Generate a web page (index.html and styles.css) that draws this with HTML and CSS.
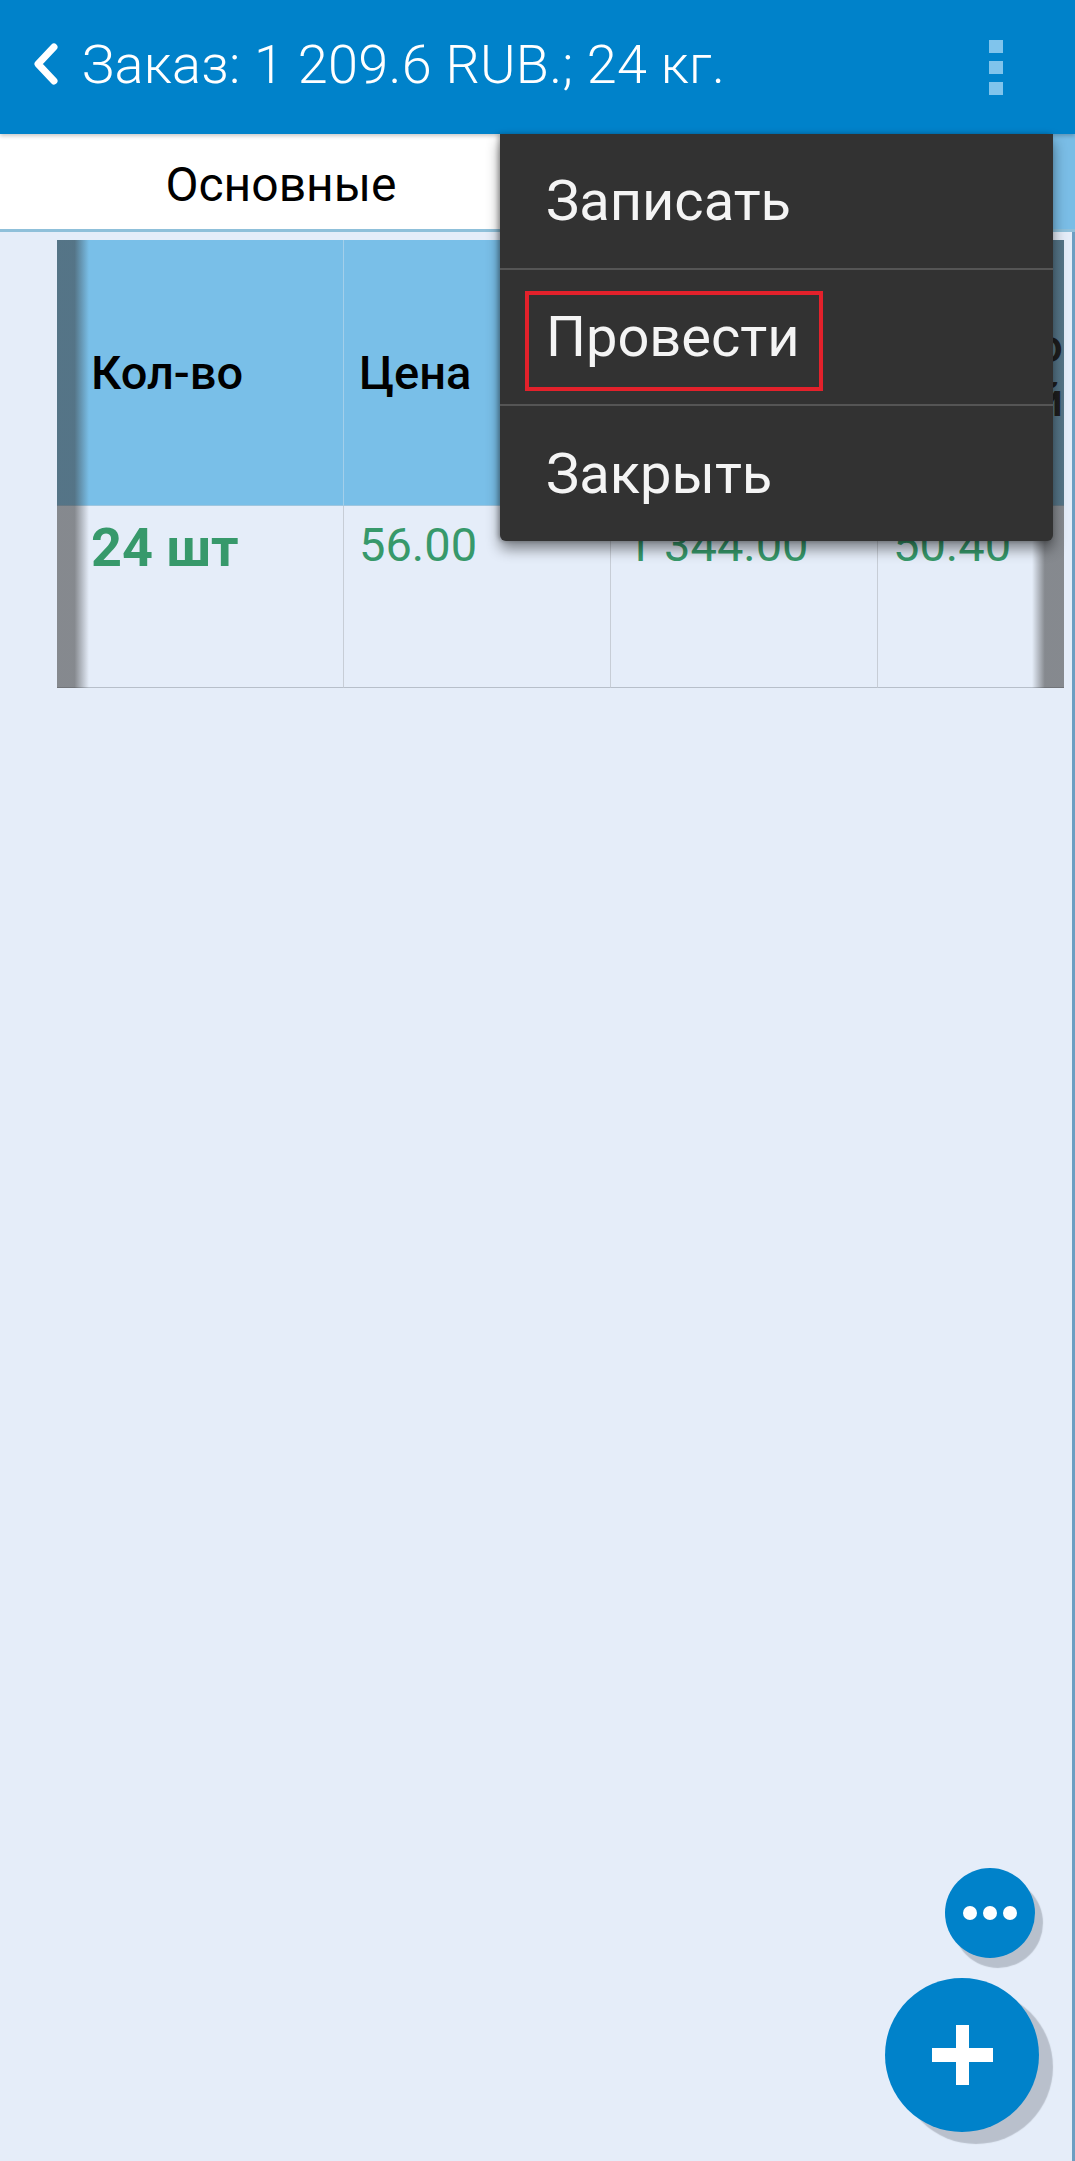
FILE: index.html
```html
<!DOCTYPE html>
<html lang="ru">
<head>
<meta charset="utf-8">
<title>Заказ</title>
<link rel="stylesheet" href="styles.css">
</head>
<body>
<div class="app">
  <header class="appbar">
    <svg class="back" width="30" height="44" viewBox="0 0 30 44" aria-hidden="true">
      <polyline points="22,5 6,22 22,39" fill="none" stroke="#fff" stroke-width="7" stroke-linecap="round" stroke-linejoin="round"/>
    </svg>
    <div class="title">Заказ: 1 209.6 RUB.; 24 кг.</div>
    <div class="kebab"><span></span><span></span><span></span></div>
  </header>
  <nav class="tabs">
    <div class="tab">Основные</div>
    <div class="tab tab-active">Товары</div>
  </nav>
  <main class="main">
    <div class="table">
      <div class="grid">
        <div class="cell head first">Кол-во</div>
        <div class="cell head">Цена</div>
        <div class="cell head">Сумма</div>
        <div class="cell head last"><span class="line">Итого со</span><span class="line">скидкой</span></div>
        <div class="cell data first qty">24 шт</div>
        <div class="cell data">56.00</div>
        <div class="cell data">1 344.00</div>
        <div class="cell data last">50.40</div>
      </div>
      <div class="fade fade-left"></div>
      <div class="fade fade-right"></div>
    </div>
  </main>
</div>

<div class="menu">
  <div class="menu-item">Записать</div>
  <div class="menu-item marked">Провести<span class="mark"></span></div>
  <div class="menu-item">Закрыть</div>
</div>

<div class="fab fab-small"><span></span><span></span><span></span></div>
<div class="fab fab-large"><span class="plus-h"></span><span class="plus-v"></span></div>
</body>
</html>
```
FILE: styles.css
```css
* { box-sizing: border-box; }
html, body { margin: 0; padding: 0; }
body {
  width: 1075px;
  height: 2161px;
  overflow: hidden;
  position: relative;
  background: #e5edf9;
  font-family: Roboto, "Noto Sans", "Liberation Sans", sans-serif;
}
.app {
  display: flex;
  flex-direction: column;
  height: 2161px;
}
.appbar {
  height: 134px;
  flex: none;
  background: #0082ca;
  display: flex;
  align-items: center;
  padding: 0 0 6px 32px;
  position: relative;
  z-index: 2;
  box-shadow: 0 2px 4px rgba(0, 0, 0, 0.22);
}
.back { flex: none; margin-right: 20px; }
.title {
  color: #fff;
  font-weight: 300;
  font-size: 54px;
  letter-spacing: 0.3px;
  white-space: nowrap;
}
.kebab {
  margin-left: auto;
  margin-right: 72px;
  margin-top: 6px;
  display: flex;
  flex-direction: column;
  gap: 8px;
}
.kebab span {
  display: block;
  width: 14px;
  height: 13px;
  background: #80c4ec;
}
.tabs {
  height: 98px;
  flex: none;
  display: flex;
  border-bottom: 3px solid #8fc0da;
  background: #fff;
}
.tab {
  width: 562px;
  display: flex;
  align-items: center;
  justify-content: center;
  font-size: 48px;
  color: #000;
  padding-top: 6px;
}
.tab-active {
  flex: 1;
  width: auto;
  background: #7abde6;
}
.main {
  flex: 1;
  padding: 8px 0 0 57px;
  border-right: 3px solid #6d9ec2;
}
.table {
  position: relative;
  width: 1007px;
  height: 448px;
  overflow: hidden;
}
.grid {
  display: grid;
  grid-template-columns: 287px 267px 267px 186px;
  grid-template-rows: 266px 182px;
}
.cell {
  border-right: 1px solid #c7cdd6;
  border-bottom: 1px solid #b7bfca;
  padding-left: 15px;
  white-space: nowrap;
}
.cell.first { padding-left: 34px; }
.head {
  background: #79bfe8;
  border-right-color: #a3cfea;
  border-bottom-color: #9fc6df;
  display: flex;
  flex-direction: column;
  justify-content: center;
  font-size: 47px;
  font-weight: 500;
  color: #000;
  line-height: 54px;
}
.head.last {
  align-items: flex-end;
  padding-left: 0;
  padding-right: 1px;
  border-right: none;
}
.line { display: block; }
.data {
  color: #37996b;
  font-size: 47px;
  line-height: 1.2;
  padding-top: 11px;
}
.data.last { border-right: none; }
.data.qty {
  font-size: 54px;
  font-weight: 700;
  padding-top: 10px;
}
.fade {
  position: absolute;
  top: 0;
  bottom: 0;
  width: 32px;
}
.fade-left {
  left: 0;
  background: linear-gradient(to right, rgba(55, 55, 55, 0.55) 0, rgba(55, 55, 55, 0.55) 55%, rgba(55, 55, 55, 0) 100%);
}
.fade-right {
  right: 0;
  background: linear-gradient(to left, rgba(55, 55, 55, 0.55) 0, rgba(55, 55, 55, 0.55) 60%, rgba(55, 55, 55, 0) 100%);
}
.menu {
  position: absolute;
  top: 134px;
  left: 500px;
  width: 553px;
  background: #323232;
  border-radius: 0 0 6px 6px;
  box-shadow: 0 8px 14px rgba(0, 0, 0, 0.45), -2px 0 4px rgba(0, 0, 0, 0.25);
  z-index: 5;
}
.menu-item {
  height: 136px;
  display: flex;
  align-items: center;
  padding-left: 46px;
  color: #f4f4f4;
  font-size: 56px;
  border-bottom: 2px solid #555;
  position: relative;
}
.menu-item:last-child {
  height: 135px;
  border-bottom: none;
}
.mark {
  position: absolute;
  left: 25px;
  top: 21px;
  width: 298px;
  height: 100px;
  border: 4px solid #e3212b;
}
.fab {
  position: absolute;
  border-radius: 50%;
  background: #0082ca;
  display: flex;
  align-items: center;
  justify-content: center;
  z-index: 4;
}
.fab-small {
  left: 945px;
  top: 1868px;
  width: 90px;
  height: 90px;
  gap: 6px;
  box-shadow: 8px 10px 1px #b8c0cc;
}
.fab-small span {
  width: 14px;
  height: 14px;
  border-radius: 50%;
  background: #fff;
}
.fab-large {
  left: 885px;
  top: 1978px;
  width: 154px;
  height: 154px;
  box-shadow: 14px 12px 1px #b9c0cc;
}
.plus-h, .plus-v {
  position: absolute;
  background: #fff;
}
.plus-h { width: 61px; height: 14px; left: 47px; top: 70px; }
.plus-v { width: 13px; height: 60px; left: 71px; top: 47px; }
```
